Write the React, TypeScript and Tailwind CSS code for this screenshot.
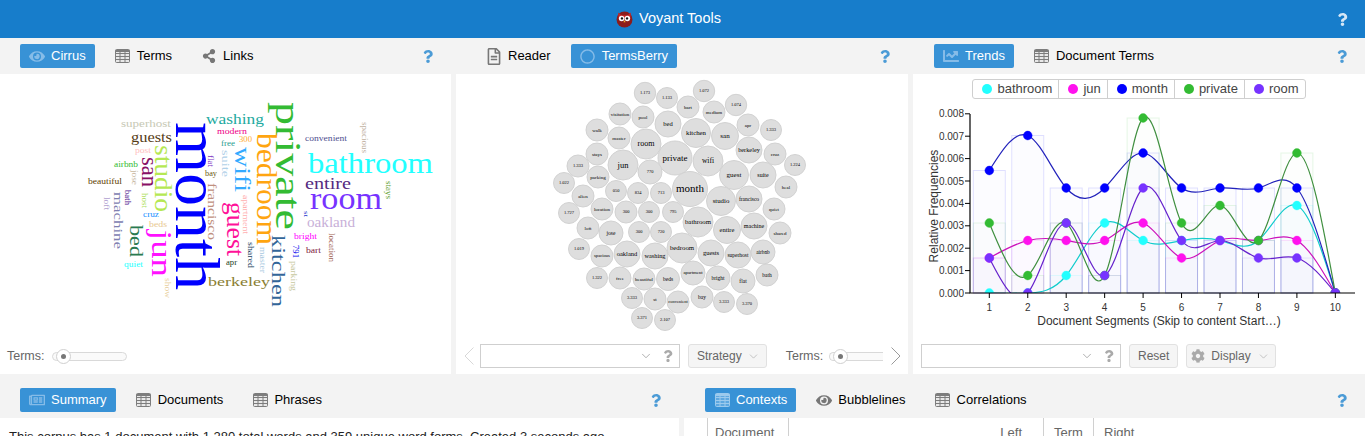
import type { ReactNode } from 'react'
import { ChevronDown } from 'lucide-react'
import { FaChartLine, FaCog, FaEye, FaQuestion, FaRegCircle, FaRegFileAlt, FaRegNewspaper, FaShareAlt } from 'react-icons/fa'

const SANS = { fontFamily: '"Liberation Sans", Arial, sans-serif' }
const SERIF = '"Liberation Serif", "Times New Roman", serif'

// word, x, y, size, rotated, colour, length
const WORDS: [string, number, number, number, boolean, string, number][] = [
  ['month', 176, 122, 64, true, '#0000ff', 168],
  ['private', 276, 102, 36, true, '#33bb33', 128],
  ['bathroom', 308, 173, 30, false, '#22ffff', 125],
  ['bedroom', 257, 133, 29, true, '#ffa510', 112],
  ['room', 310, 209, 32, false, '#7733ff', 72],
  ['kitchen', 272, 235, 19, true, '#336699', 72],
  ['jun', 152, 230, 30, true, '#ff11ff', 47],
  ['studio', 155, 145, 25, true, '#b5e853', 67],
  ['guest', 227, 202, 26, true, '#ff1199', 54],
  ['wifi', 235, 147, 23, true, '#33aaff', 45],
  ['entire', 305, 189, 16, false, '#552a80', 46],
  ['san', 142, 157, 23, true, '#881166', 30],
  ['bed', 130, 225, 19, true, '#2a7a50', 32],
  ['oakland', 307, 227, 15, false, '#c8b0d8', 48],
  ['berkeley', 208, 286, 13.5, false, '#8b8033', 62],
  ['washing', 206, 124, 14, false, '#22aaa0', 58],
  ['machine', 114, 192, 12.5, true, '#8080b0', 57],
  ['francisco', 208, 183, 12, true, '#c09080', 57],
  ['guests', 131, 142, 14, false, '#553c15', 41],
  ['superhost', 121, 127, 11, false, '#c7c9b5', 50],
  ['suite', 222, 150, 11, true, '#b0d0e8', 27],
  ['modern', 217, 134, 8.5, false, '#ee0088', 30],
  ['300', 239, 142, 9, false, '#ffaa33', 13],
  ['free', 221, 146, 9, false, '#2a9d8f', 14],
  ['post', 135, 153, 9, false, '#ffc0c0', 16],
  ['flat', 208, 155, 8.5, true, '#7a30c0', 12],
  ['bay', 205, 176, 9, false, '#6d5a10', 12],
  ['airbnb', 114, 167, 8.5, false, '#33bb33', 24],
  ['jose', 132, 170, 8, true, '#c8b8a0', 15],
  ['beautiful', 88, 184, 8, false, '#604000', 34],
  ['bath', 125, 190, 8, true, '#502090', 15],
  ['loft', 104, 197, 8, true, '#b0a0d0', 13],
  ['host', 142, 193, 8, true, '#b0e060', 15],
  ['apartment', 243, 195, 8, true, '#ffb0b0', 39],
  ['cruz', 143, 217, 8, false, '#2090ff', 16],
  ['beds', 149, 227, 8, false, '#e8c890', 18],
  ['shared', 248, 242, 8.5, true, '#204060', 26],
  ['apr', 226, 265, 8, false, '#204020', 11],
  ['quiet', 124, 267, 9, false, '#22ffff', 19],
  ['show', 165, 278, 8, true, '#e8d0a0', 20],
  ['convenient', 305, 141, 8.5, false, '#505090', 42],
  ['spacious', 362, 122, 9, true, '#c0b0a0', 31],
  ['stays', 386, 181, 8.5, true, '#60a030', 18],
  ['st', 304, 211, 7, true, '#2233cc', 6],
  ['bright', 294, 239, 8.5, false, '#ff00ff', 23],
  ['location', 329, 233, 9, true, '#a06050', 29],
  ['791', 293, 245, 8, true, '#0000ee', 13],
  ['bart', 306, 253, 8, false, '#802040', 15],
  ['parking', 291, 261, 9, true, '#c8c8a0', 30],
  ['master', 260, 247, 9, true, '#a8c8e0', 26],
]

// label, x, y, radius, font size
const BERRIES: [string, number, number, number, number][] = [
  ['1.173', 645, 93, 10.7, 4.5], ['1.133', 667, 98, 10.5, 4.5], ['visitation', 620, 114, 11, 5],
  ['pool', 643, 117, 11, 5], ['bed', 668, 124, 13, 6.5], ['walk', 597, 130, 11, 5],
  ['master', 619, 138, 11, 5], ['room', 646, 144, 15, 8], ['stays', 597, 154, 11, 5],
  ['jun', 623, 165, 15, 8.5], ['private', 675, 158, 17, 9], ['1.333', 578, 166, 11, 4.5],
  ['1.022', 564, 183, 10.5, 4.5], ['parking', 598, 177, 11, 5], ['770', 650, 172, 12, 4.5],
  ['050', 616, 191, 10.5, 4.5], ['834', 638, 193, 10.5, 4.5], ['713', 661, 193, 10.5, 4.5],
  ['alien', 583, 196, 11, 5], ['1.072', 704, 91, 10.7, 4.5], ['bart', 688, 107, 11, 5],
  ['medium', 714, 112, 11, 5], ['1.074', 736, 105, 10.7, 4.5], ['apr', 748, 125, 11, 5],
  ['1.333', 771, 130, 10.5, 4.5], ['kitchen', 696, 133, 14.5, 6.8], ['san', 725, 136, 13.5, 7],
  ['berkeley', 749, 150, 13, 6.3], ['cruz', 775, 154, 11, 5], ['1.224', 795, 165, 10.5, 4.5],
  ['wifi', 708, 161, 15, 7.5], ['guest', 734, 175, 14.5, 7], ['suite', 763, 175, 13, 6],
  ['heal', 786, 187, 11, 5], ['month', 690, 189, 17.5, 11], ['studio', 721, 201, 14.5, 6.8],
  ['francisco', 749, 199, 13, 5.5], ['1.727', 569, 213, 10.5, 4.5], ['location', 602, 209, 11, 5],
  ['300', 626, 212, 11, 4.5], ['300', 649, 212, 10.5, 4.5], ['795', 673, 212, 10.5, 4.5],
  ['loft', 588, 228, 11, 5], ['jose', 611, 233, 12, 5.5], ['300', 639, 232, 10.5, 4.5],
  ['720', 661, 232, 10.5, 4.5], ['1.019', 579, 249, 10.5, 4.5], ['spacious', 602, 256, 11, 4.6],
  ['oakland', 627, 254, 13, 6.5], ['washing', 655, 256, 13, 6.3], ['bedroom', 682, 248, 15, 6.8],
  ['1.322', 597, 278, 10.5, 4.5], ['free', 620, 278, 11, 5], ['beautiful', 644, 279, 11, 5],
  ['beds', 668, 279, 11.5, 5.5], ['3.333', 632, 298, 10.5, 4.5], ['st', 655, 299, 11, 5],
  ['convenient', 678, 302, 11, 4.4], ['3.371', 642, 318, 10.5, 4.5], ['2.107', 665, 320, 10.5, 4.5],
  ['quiet', 774, 209, 11, 5], ['bathroom', 698, 222, 15, 6.8], ['entire', 727, 230, 13.5, 6.5],
  ['machine', 754, 226, 13, 6], ['shared', 780, 233, 11, 5], ['guests', 711, 253, 13, 6.5],
  ['superhost', 738, 255, 13, 5.5], ['airbnb', 763, 252, 12, 5.3], ['apartment', 693, 273, 12, 4.8],
  ['bright', 718, 278, 12, 5.5], ['flat', 743, 281, 12, 5.5], ['bath', 767, 275, 11, 5.5],
  ['bay', 702, 297, 11, 5.5], ['3.333', 724, 302, 10.5, 4.5], ['3.370', 747, 304, 10.5, 4.5],
]

const SERIES = [
  { name: 'bathroom', color: '#22ffff', line: '#11cccc', counts: [0, 0, 1, 4, 3, 3, 3, 3, 5, 0] },
  { name: 'jun', color: '#ff11ee', line: '#cc11bb', counts: [2, 3, 3, 3, 4, 2, 3, 3, 3, 0] },
  { name: 'month', color: '#0000ff', line: '#2222bb', counts: [7, 9, 6, 6, 8, 6, 6, 6, 6, 0] },
  { name: 'private', color: '#33bb33', line: '#3f8f3f', counts: [4, 1, 4, 1, 10, 4, 5, 3, 8, 0] },
  { name: 'room', color: '#7733ff', line: '#6622cc', counts: [2, 0, 4, 1, 6, 3, 3, 2, 2, 0] },
]

const xAt = (i: number) => 989.3 + i * 38.45
const yAt = (count: number) => 293 - (count / 1280) * 22400

// natural cubic spline through evenly spaced points, as bezier segments
function splinePath(counts: number[]) {
  const ys = counts.map(yAt)
  const n = ys.length
  const c = new Array(n).fill(0)
  const d = new Array(n).fill(0)
  for (let i = 1; i < n - 1; i++) {
    const rhs = 6 * (ys[i + 1] - 2 * ys[i] + ys[i - 1])
    const m = 4 - c[i - 1]
    c[i] = 1 / m
    d[i] = (rhs - d[i - 1]) / m
  }
  const m2 = new Array(n).fill(0)
  for (let i = n - 2; i > 0; i--) m2[i] = d[i] - c[i] * m2[i + 1]
  let path = `M${xAt(0)} ${ys[0]}`
  for (let i = 0; i < n - 1; i++) {
    const dy = ys[i + 1] - ys[i]
    const t0 = dy - (2 * m2[i] + m2[i + 1]) / 6
    const t1 = dy + (m2[i] + 2 * m2[i + 1]) / 6
    path += `C${xAt(i) + 38.45 / 3} ${ys[i] + t0 / 3} ${xAt(i + 1) - 38.45 / 3} ${ys[i + 1] - t1 / 3} ${xAt(i + 1)} ${ys[i + 1]}`
  }
  return path
}

function GridIcon({ active }: { active?: boolean }) {
  const stroke = active ? '#9ccaed' : '#7d7d7d'
  return (
    <svg width="15" height="14" viewBox="0 0 15 14" fill="none" stroke={stroke} strokeWidth="1">
      <rect x="0.5" y="0.5" width="14" height="13" rx="1" fill={active ? '#5ea8e0' : '#e8e8e8'} />
      <path d="M0.5 4.5H14.5M0.5 7.5H14.5M0.5 10.5H14.5M5 1V13.5M10 1V13.5" />
      <path d="M0.5 2H14.5" strokeWidth="2" />
    </svg>
  )
}

function Tab({ active, icon, label }: { active?: boolean; icon: ReactNode; label: string }) {
  return (
    <div className={`flex h-6 items-center gap-[6px] rounded-[2px] px-[9px] text-[13px] ${active ? 'bg-[#3892d6] text-white' : 'text-black'}`}>
      <span className={`flex w-4 justify-center ${active ? 'text-[#86bce8]' : 'text-[#777]'}`}>{icon}</span>
      {label}
    </div>
  )
}

function TabBar({ pad, height, children }: { pad: string; height: string; children: ReactNode }) {
  return (
    <div className={`flex shrink-0 items-center gap-[11px] pb-[6px] ${pad} ${height}`}>
      {children}
      <span className="ml-auto mr-[17px] flex w-3 justify-center text-[#4b9bd6]">
        <FaQuestion size={13} />
      </span>
    </div>
  )
}

function Combo() {
  return (
    <div className="flex h-6 w-[200px] items-center border border-[#cfcfcf] bg-white">
      <ChevronDown size={14} strokeWidth={1} className="ml-auto text-[#777]" />
      <span className="ml-[9px] mr-[5px] text-[#aaa]">
        <FaQuestion size={12} />
      </span>
    </div>
  )
}

function ToolButton({ children }: { children: ReactNode }) {
  return (
    <div className="flex h-6 items-center rounded-[3px] border border-[#e1e1e1] bg-[#f5f5f5] text-[12px] text-[#666]">
      {children}
    </div>
  )
}

function Slider({ width, clipped }: { width: string; clipped?: boolean }) {
  return (
    <div className={`relative h-[9px] border border-[#d9d9d9] bg-[#fafafa] ${width} ${clipped ? 'rounded-l-full border-r-0' : 'rounded-full'}`}>
      <div className="absolute left-[3px] top-[-4px] flex h-[15px] w-[15px] items-center justify-center rounded-full border border-[#d0d0d0] bg-white">
        <div className="h-[5px] w-[5px] rounded-full bg-[#777]" />
      </div>
    </div>
  )
}

function Arrow({ dir }: { dir: 'left' | 'right' }) {
  return (
    <svg width="10" height="18" viewBox="0 0 10 18" fill="none" stroke={dir === 'left' ? '#d8d8d8' : '#9a9a9a'} strokeWidth="1">
      <path d={dir === 'left' ? 'M9.5 0.5L1 9L9.5 17.5' : 'M0.5 0.5L9 9L0.5 17.5'} />
    </svg>
  )
}

function Cirrus() {
  return (
    <svg className="block" width="451" height="268" viewBox="0 74 451 268">
      {WORDS.map(([word, x, y, size, rotated, color, length]) => (
        <text
          key={word}
          x={x}
          y={y}
          fontSize={size}
          fontFamily={SERIF}
          fill={color}
          textLength={length}
          lengthAdjust="spacingAndGlyphs"
          transform={rotated ? `rotate(90 ${x} ${y})` : undefined}
        >
          {word}
        </text>
      ))}
    </svg>
  )
}

function TermsBerry() {
  return (
    <svg className="block" width="452" height="268" viewBox="456 74 452 268">
      {BERRIES.map(([label, x, y, r, size], i) => (
        <g key={i}>
          <circle cx={x} cy={y} r={r} fill="#dedede" stroke="#d2d2d2" />
          <text x={x} y={y + size * 0.3} fontSize={size} fontFamily={SERIF} fill="#000" textAnchor="middle">
            {label}
          </text>
        </g>
      ))}
    </svg>
  )
}

function Trends() {
  return (
    <svg className="block" width="452" height="242" viewBox="913 100 452 242" style={SANS}>
      <defs>
        <clipPath id="plot">
          <rect x="970" y="100" width="385" height="193" />
        </clipPath>
      </defs>
      {SERIES.map((s) =>
        s.counts.map((count, i) =>
          count > 0 ? (
            <rect
              key={s.name + i}
              x={xAt(i) - 16}
              y={yAt(count)}
              width={32}
              height={293 - yAt(count)}
              fill={s.color}
              fillOpacity={0.012}
              stroke={s.color}
              strokeOpacity={0.12}
            />
          ) : null,
        ),
      )}
      <g clipPath="url(#plot)">
        {SERIES.map((s) => (
          <g key={s.name}>
            <path d={splinePath(s.counts)} fill="none" stroke={s.line} strokeWidth="1.2" />
            {s.counts.map((count, i) => (
              <circle key={i} cx={xAt(i)} cy={yAt(count)} r={4.4} fill={s.color} stroke={s.color} strokeOpacity={0.4} />
            ))}
          </g>
        ))}
      </g>
      <path d="M970 114V293H1355" fill="none" stroke="#000" strokeWidth="1.2" />
      {[0, 1, 2, 3, 4, 5, 6, 7, 8].map((t) => (
        <g key={t}>
          <path d={`M965 ${293 - t * 22.4}H970`} stroke="#000" />
          <text x={964} y={296.5 - t * 22.4} fontSize="10" fill="#333" textAnchor="end">
            {`0.00${t}`}
          </text>
        </g>
      ))}
      {SERIES[0].counts.map((_, i) => (
        <g key={i}>
          <path d={`M${xAt(i)} 293V298`} stroke="#000" />
          <text x={xAt(i)} y={311} fontSize="10" fill="#333" textAnchor="middle">
            {i + 1}
          </text>
        </g>
      ))}
      <text x={1159} y={325} fontSize="12" fill="#333" textAnchor="middle">
        Document Segments (Skip to content Start…)
      </text>
      <text transform="rotate(-90 938 206)" x={938} y={206} fontSize="12" fill="#333" textAnchor="middle">
        Relative Frequencies
      </text>
    </svg>
  )
}

function Legend() {
  return (
    <div className="mx-auto mb-px mt-[5px] flex h-5 w-fit rounded-[3px] border border-[#cfcfcf] text-[13px] text-[#444]">
      {SERIES.map((s, i) => (
        <div key={s.name} className={`flex items-center gap-[5px] pl-[9px] pr-[6px] ${i > 0 ? 'border-l border-[#cfcfcf]' : ''}`}>
          <span className="h-[10px] w-[10px] rounded-full" style={{ backgroundColor: s.color }} />
          {s.name}
        </div>
      ))}
    </div>
  )
}

export default function App() {
  return (
    <div className="flex h-[436px] w-[1365px] flex-col overflow-hidden bg-[#f3f3f3]" style={SANS}>
      {/* 顶栏 */}
      <header className="relative flex h-[38px] shrink-0 items-center justify-center gap-[6px] bg-[#177dcb] pr-[28px] text-[14.5px] text-white">
        <svg width="17" height="17" viewBox="0 0 16 16">
          <circle cx="8" cy="8" r="7.5" fill="#8c1c1c" />
          <path d="M2 1.5L5 4H11L14 1.5L13.5 7H2.5Z" fill="#c62828" />
          <circle cx="5.3" cy="7" r="2.6" fill="#fff" />
          <circle cx="10.7" cy="7" r="2.6" fill="#fff" />
          <circle cx="5.6" cy="7" r="1.1" fill="#111" />
          <circle cx="10.4" cy="7" r="1.1" fill="#111" />
          <path d="M8 8.5L9 10.5H7Z" fill="#f2b632" />
        </svg>
        Voyant Tools
        <span className="absolute right-[16px] top-[13px] text-[#d5e7f6]">
          <FaQuestion size={13} />
        </span>
      </header>

      {/* 上排三个面板 */}
      <div className="flex h-[336px] shrink-0 gap-[5px]">
        <section className="flex w-[451px] flex-col">
          <TabBar pad="pl-[20px] pt-[6px]" height="h-9">
            <Tab active icon={<FaEye size={17} />} label="Cirrus" />
            <Tab icon={<GridIcon />} label="Terms" />
            <Tab icon={<FaShareAlt size={14} />} label="Links" />
          </TabBar>
          <div className="flex-1 bg-white">
            <Cirrus />
            <div className="flex h-7 items-center gap-[7px] pl-[7px] text-[12.5px] text-[#666]">
              Terms:
              <Slider width="w-[75px]" />
            </div>
          </div>
        </section>

        <section className="flex w-[452px] flex-col">
          <TabBar pad="pl-[21px] pt-[6px]" height="h-9">
            <Tab icon={<FaRegFileAlt size={17} />} label="Reader" />
            <Tab active icon={<FaRegCircle size={15} />} label="TermsBerry" />
          </TabBar>
          <div className="flex-1 bg-white">
            <TermsBerry />
            <div className="flex h-7 items-center pl-[8px] text-[12.5px] text-[#666]">
              <Arrow dir="left" />
              <div className="ml-[6px]">
                <Combo />
              </div>
              <div className="ml-[8px]">
                <ToolButton>
                  <span className="flex items-center gap-[5px] pl-[8px] pr-[6px]">
                    Strategy
                    <ChevronDown size={13} strokeWidth={1} className="text-[#999]" />
                  </span>
                </ToolButton>
              </div>
              <span className="ml-[19px]">Terms:</span>
              <div className="ml-[6px]">
                <Slider width="w-[54px]" clipped />
              </div>
              <div className="ml-[8px]">
                <Arrow dir="right" />
              </div>
            </div>
          </div>
        </section>

        <section className="flex w-[452px] flex-col">
          <TabBar pad="pl-[21px] pt-[6px]" height="h-9">
            <Tab active icon={<FaChartLine size={18} />} label="Trends" />
            <Tab icon={<GridIcon />} label="Document Terms" />
          </TabBar>
          <div className="flex-1 bg-white">
            <Legend />
            <Trends />
            <div className="flex h-7 items-center gap-[8px] pl-[8px]">
              <Combo />
              <ToolButton>
                <span className="px-[8px]">Reset</span>
              </ToolButton>
              <ToolButton>
                <span className="flex items-center gap-[6px] pl-[4px] pr-[5px]">
                  <FaCog size={14} className="text-[#aaa]" />
                  Display
                  <ChevronDown size={13} strokeWidth={1} className="text-[#999]" />
                </span>
              </ToolButton>
            </div>
          </div>
        </section>
      </div>

      {/* 下排两个面板 */}
      <div className="flex min-h-0 flex-1 gap-[5px]">
        <section className="flex w-[679px] flex-col">
          <TabBar pad="pl-[20px] pt-[14px]" height="h-[44px]">
            <Tab active icon={<FaRegNewspaper size={18} />} label="Summary" />
            <Tab icon={<GridIcon />} label="Documents" />
            <Tab icon={<GridIcon />} label="Phrases" />
          </TabBar>
          <div className="flex-1 bg-white pl-[9px] pt-[11px] text-[13px] leading-[15px] text-[#222]">
            This corpus has 1 document with 1,280 total words and 359 unique word forms. Created 3 seconds ago.
          </div>
        </section>

        <section className="flex w-[681px] flex-col">
          <TabBar pad="pl-[21px] pt-[14px]" height="h-[44px]">
            <Tab active icon={<GridIcon active />} label="Contexts" />
            <Tab icon={<FaEye size={17} />} label="Bubblelines" />
            <Tab icon={<GridIcon />} label="Correlations" />
          </TabBar>
          <div className="flex flex-1 bg-white pl-[23px] text-[13px] leading-[15px] text-[#666]">
            <div className="w-[82px] border-x border-[#d0d0d0] pl-[7px] pt-[7px]">Document</div>
            <div className="w-[254px] pr-[21px] pt-[7px] text-right">Left</div>
            <div className="w-[51px] border-x border-[#d0d0d0] pl-[10px] pt-[7px]">Term</div>
            <div className="pl-[10px] pt-[7px]">Right</div>
          </div>
        </section>
      </div>
    </div>
  )
}
